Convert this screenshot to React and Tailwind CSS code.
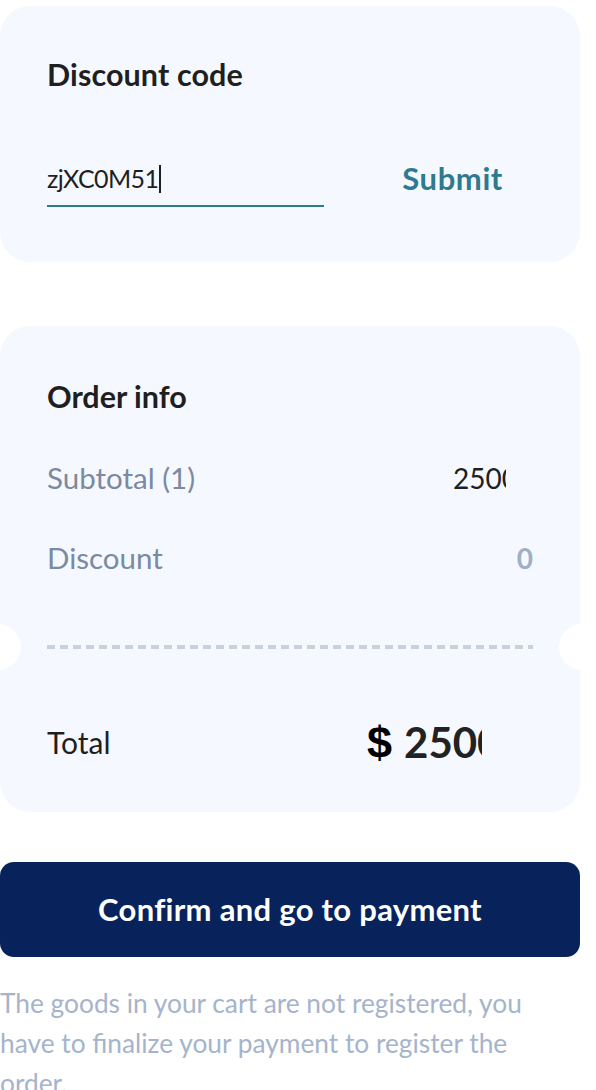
export default function App() {
  const font = { fontFamily: 'Lato, "Noto Sans", sans-serif' };
  return (
    <div className="w-[596px] h-[1090px] bg-white overflow-hidden" style={font}>
      <div className="pt-[6px] pr-[16px]">
        <div className="h-[256px] rounded-[30px] bg-[#f5f9ff] pl-[47px] pr-[77px] pt-[45px]">
          <div className="text-[30.5px] font-bold text-[#1f1f1f] leading-[46px] tracking-[0.1px]">Discount code</div>
          <div className="flex items-end justify-between mt-[56px]">
            <div className="w-[277px] border-b-2 border-[#2e7a8e] h-[54px] flex items-center">
              <span className="text-[25px] text-[#1f1f1f] tracking-[-0.6px]">zjXC0M51</span>
              <span className="w-[2px] h-[28px] bg-[#1f1f1f] ml-[1px]"></span>
            </div>
            <div className="text-[31px] font-bold text-[#2e7a8e] pb-[6px] tracking-[0.6px]">Submit</div>
          </div>
        </div>
      </div>

      <div className="pt-[64px] pr-[16px]">
        <div className="relative h-[486px] rounded-[30px] bg-[#f5f9ff] pt-[50px]">
          <div className="px-[47px]">
            <div className="text-[30.5px] font-bold text-[#1f1f1f] leading-[40px]">Order info</div>
            <div className="flex justify-between items-center mt-[42px] h-[40px]">
              <span className="text-[29.5px] text-[#7b8aa0]">Subtotal (1)</span>
              <span className="text-[28px] text-[#1f1f1f] w-[53px] overflow-hidden whitespace-nowrap mr-[27px]">2500</span>
            </div>
            <div className="flex justify-between items-center mt-[40px] h-[40px]">
              <span className="text-[29.5px] text-[#7b8aa0]">Discount</span>
              <span className="text-[28px] font-bold text-[#a0afc6]">0</span>
            </div>
          </div>
          <div className="relative mt-[46px] h-[46px] flex items-center">
            <div className="absolute left-[-3px] top-0 w-[24px] h-[46px] rounded-r-full bg-white"></div>
            <div className="absolute right-[-3px] top-0 w-[24px] h-[46px] rounded-l-full bg-white"></div>
            <div className="mx-[47px] w-full h-[4px] bg-[linear-gradient(90deg,#c9d1de_0_8px,transparent_8px_13px)] bg-[length:13px_4px]"></div>
          </div>
          <div className="px-[47px] flex items-center mt-[47px] h-[50px]">
            <span className="text-[30px] text-[#1f1f1f] w-[320px]">Total</span>
            <span className="text-[45px] font-bold text-[#000] leading-none" style={{ fontFamily: '"Liberation Sans", Arial, sans-serif' }}>$</span>
            <span className="ml-[12px] text-[42px] font-bold text-[#222] w-[78px] overflow-hidden whitespace-nowrap leading-none">2500</span>
          </div>
        </div>
      </div>

      <div className="pt-[50px] pr-[16px]">
        <div className="h-[95px] rounded-[14px] bg-[#08235c] flex items-center justify-center">
          <span className="text-[31px] font-bold text-white tracking-[0.3px]">Confirm and go to payment</span>
        </div>
      </div>

      <p className="mt-[26px] text-[26.3px] leading-[40px] text-[#a5b4cb]">
        <span className="block whitespace-nowrap">The goods in your cart are not registered, you</span>
        <span className="block whitespace-nowrap">have to finalize your payment to register the</span>
        <span className="block">order.</span>
      </p>
    </div>
  );
}
